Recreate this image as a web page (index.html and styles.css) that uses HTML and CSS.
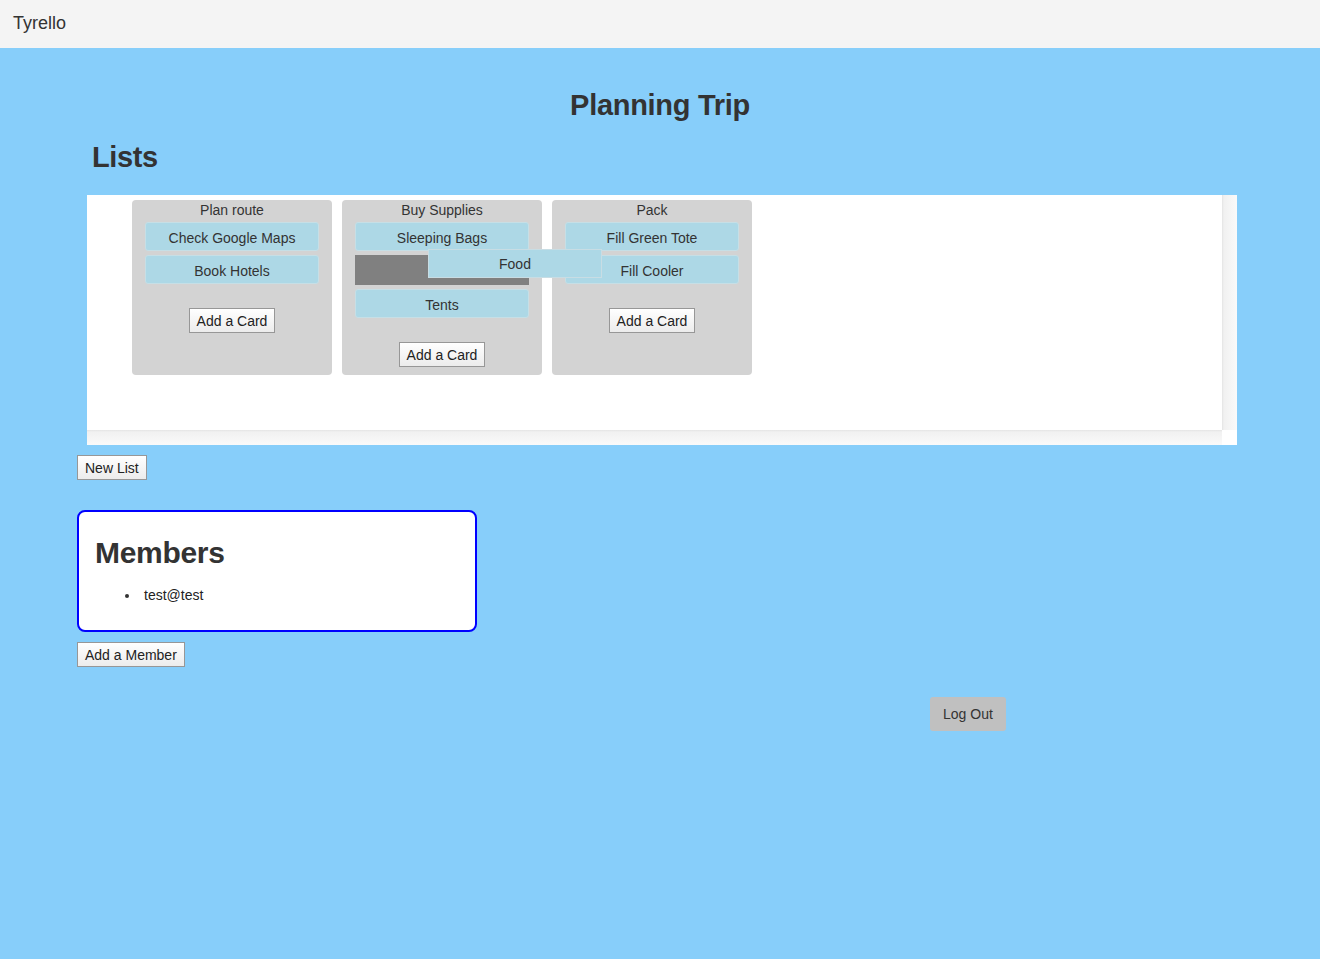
FILE: index.html
```html
<!DOCTYPE html>
<html>
<head>
<meta charset="utf-8">
<title>Tyrello</title>
<link rel="stylesheet" href="styles.css">
</head>
<body>
<header class="navbar"><span class="brand">Tyrello</span></header>
<main class="page">
  <h2 class="board-title">Planning Trip</h2>
  <h2 class="section-title">Lists</h2>
  <div class="board">
    <div class="board-content">
      <div class="lists">
        <div class="list">
          <div class="list-title">Plan route</div>
          <div class="card">Check Google Maps</div>
          <div class="card">Book Hotels</div>
          <div class="list-actions"><button class="btn-plain">Add a Card</button></div>
        </div>
        <div class="list list-drop">
          <div class="list-title">Buy Supplies</div>
          <div class="card">Sleeping Bags</div>
          <div class="placeholder"></div>
          <div class="card">Tents</div>
          <div class="list-actions"><button class="btn-plain">Add a Card</button></div>
          <div class="card card-dragging">Food</div>
        </div>
        <div class="list">
          <div class="list-title">Pack</div>
          <div class="card">Fill Green Tote</div>
          <div class="card">Fill Cooler</div>
          <div class="list-actions"><button class="btn-plain">Add a Card</button></div>
        </div>
      </div>
    </div>
    <div class="track-v"></div>
    <div class="track-h"></div>
    <div class="track-corner"></div>
  </div>
  <div class="row-new-list"><button class="btn-plain">New List</button></div>
  <section class="members">
    <h2 class="members-title">Members</h2>
    <ul class="member-list">
      <li>test@test</li>
    </ul>
  </section>
  <div class="row-add-member"><button class="btn-plain">Add a Member</button></div>
  <div class="row-logout"><button class="btn-logout">Log Out</button></div>
</main>
</body>
</html>
```
FILE: styles.css
```css
* { box-sizing: border-box; }
html, body { margin: 0; padding: 0; }
body {
  background: #87cefa;
  font-family: "Liberation Sans", Arial, sans-serif;
  font-size: 14px;
  color: #333;
  min-height: 959px;
}
.navbar {
  height: 48px;
  background: #f4f4f4;
  display: flex;
  align-items: center;
  padding-left: 13px;
  padding-bottom: 1px;
}
.brand { font-size: 18px; color: #333; }
.page { padding: 0 77px; }
.board-title {
  margin: 0;
  padding-top: 40px;
  text-align: center;
  font-size: 29px;
  font-weight: bold;
  line-height: 34px;
  letter-spacing: -0.3px;
  color: #333;
}
.section-title {
  margin: 18px 0 0 15px;
  font-size: 29px;
  font-weight: bold;
  line-height: 34px;
  letter-spacing: -0.4px;
  color: #333;
}
.board {
  margin: 21px 6px 0 10px;
  height: 250px;
  display: grid;
  grid-template-columns: 1fr 15px;
  grid-template-rows: 1fr 15px;
  background: #fff;
}
.board-content { padding: 5px 0 0 45px; }
.lists { display: flex; gap: 10px; align-items: stretch; }
.list {
  width: 200px;
  background: #d3d3d3;
  border-radius: 4px;
  padding: 0 13px 8px;
  display: flex;
  flex-direction: column;
  position: relative;
}
.list-title { text-align: center; line-height: 20px; padding-top: 0; margin-bottom: 2px; }
.card {
  height: 29px;
  background: #add8e6;
  border: 1px solid #c6dfe6;
  border-radius: 3px;
  text-align: center;
  line-height: 27px;
  padding-top: 2px;
  margin-bottom: 4px;
}
.placeholder {
  height: 30px;
  background: #808080;
  margin: 0 0 4px;
}
.card-dragging {
  position: absolute;
  left: 86px;
  top: 49px;
  width: 174px;
  height: 29px;
  line-height: 27px;
  padding-top: 1px;
  border-radius: 0;
  border-color: #c8dde4;
  z-index: 2;
  margin: 0;
}
.list-actions { text-align: center; margin-top: 20px; }
.btn-plain {
  font-family: "Liberation Sans", Arial, sans-serif;
  font-size: 14px;
  color: #222;
  height: 25px;
  padding: 0 7px;
  border: 1px solid #979797;
  background: linear-gradient(#ffffff, #ececec);
  border-radius: 0;
}
.track-v {
  background: linear-gradient(to right, #e4e4e4 0, #f1f1f1 2px, #fafafa 100%);
}
.track-h {
  background: linear-gradient(#e4e4e4 0, #f1f1f1 2px, #fafafa 100%);
}
.track-corner { background: #fff; }
.row-new-list { margin-top: 10px; }
.members {
  margin-top: 30px;
  width: 400px;
  height: 122px;
  background: #fff;
  border: 2px solid #0000ff;
  border-radius: 8px;
  padding: 0 16px;
}
.members-title {
  margin: 23px 0 0;
  font-size: 30px;
  font-weight: bold;
  line-height: 36px;
  letter-spacing: -0.3px;
  color: #333;
}
.member-list { margin: 14px 0 0; padding-left: 49px; color: #222; list-style: none; }
.member-list li { line-height: 20px; position: relative; }
.member-list li::before {
  content: "";
  position: absolute;
  left: -19px;
  top: 9px;
  width: 4px;
  height: 4px;
  border-radius: 50%;
  background: #333;
}
.row-add-member { margin-top: 10px; }
.row-logout { margin-top: 30px; padding-left: 853px; }
.btn-logout {
  font-family: "Liberation Sans", Arial, sans-serif;
  font-size: 14px;
  color: #333;
  background: #c0c0c0;
  border: none;
  border-radius: 3px;
  height: 34px;
  padding: 0 13px;
}
```
